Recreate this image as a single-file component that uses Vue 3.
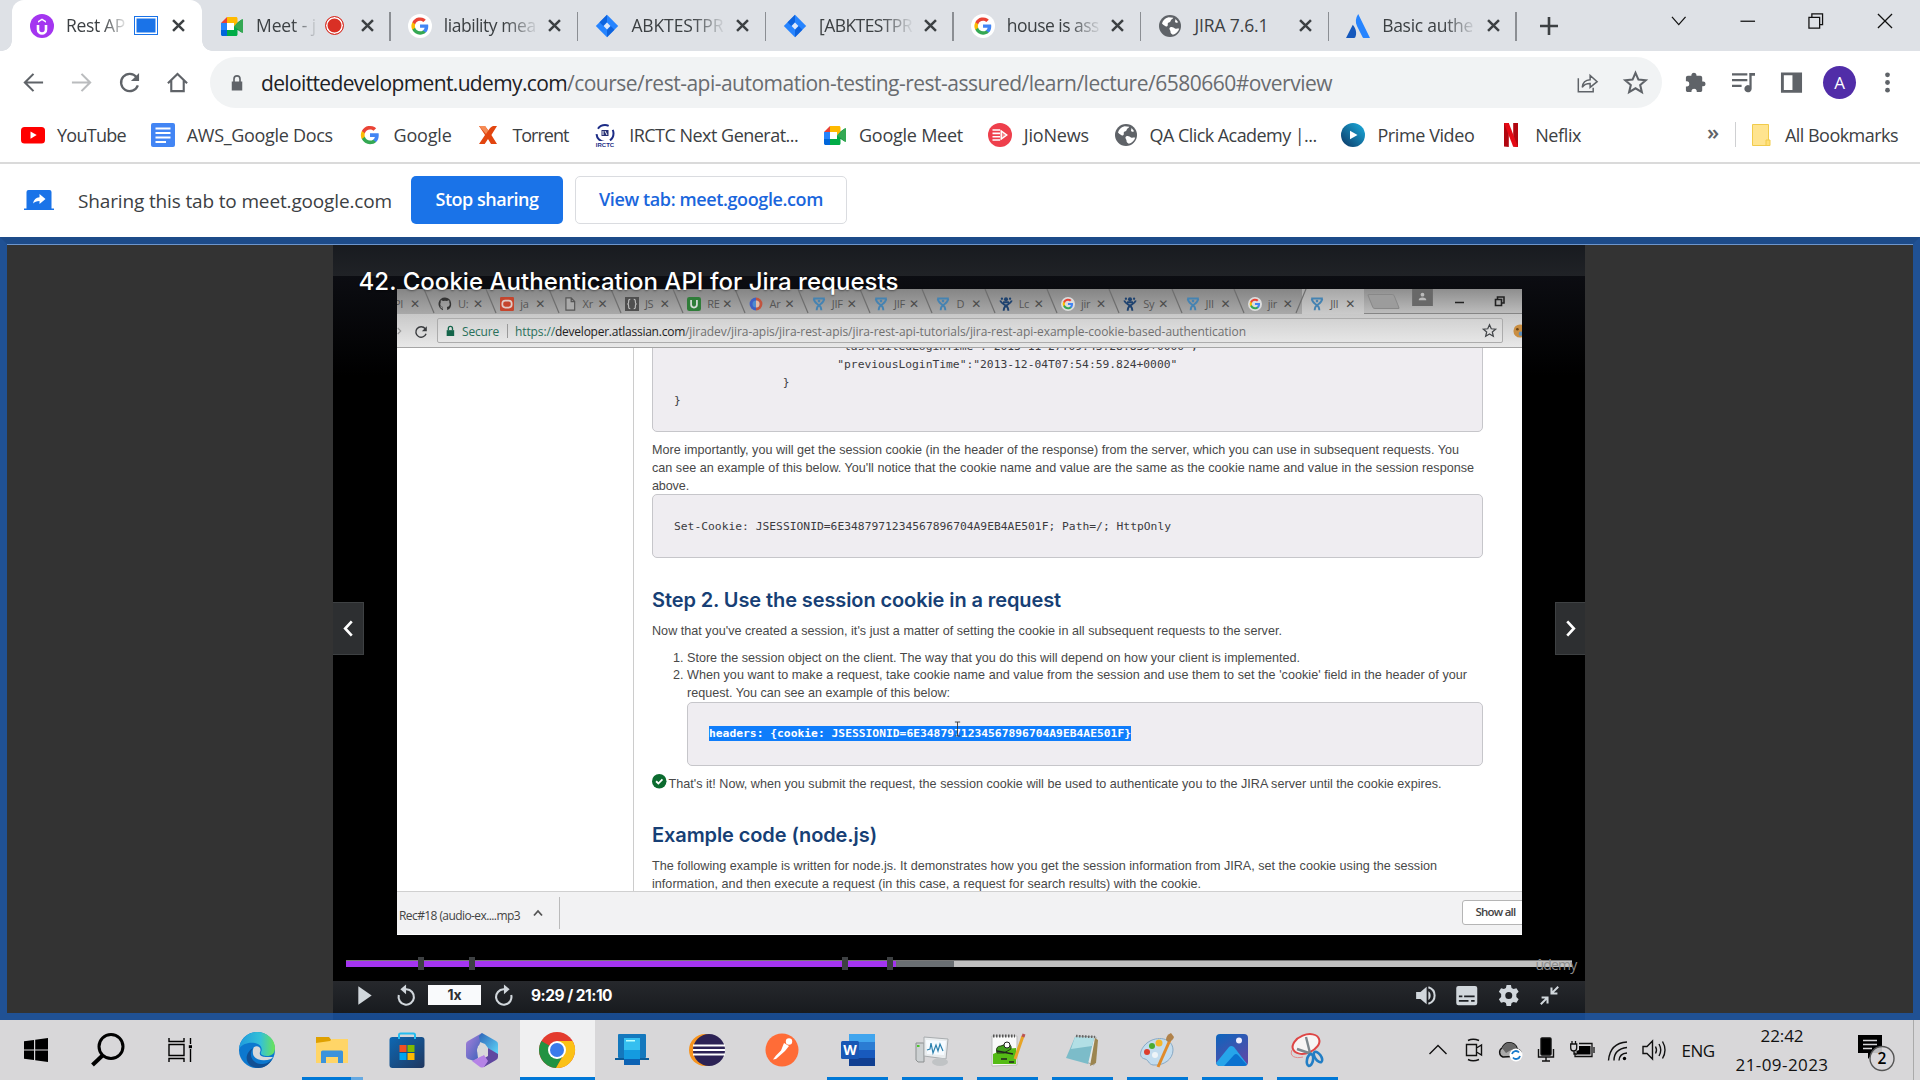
<script setup>
// Spreads or tightens the letters of a label so that it fills the given width.
const vFit = {
  mounted(el, { value }) {
    const count = el.textContent.length
    const natural = el.getBoundingClientRect().width
    if (value && count) el.style.letterSpacing = `${(value - natural) / count}px`
  }
}

const google = '<path fill="#4285f4" d="M22.5 12.2c0-.8-.1-1.500-.2-2.200H12v4.300h5.900c-.3 1.400-1 2.500-2.200 3.300v2.800h3.600c2-1.900 3.200-4.700 3.200-8.200z"/><path fill="#34a853" d="M12 23c3 0 5.500-1 7.300-2.700l-3.600-2.700c-1 .7-2.200 1.100-3.700 1.100-2.900 0-5.300-1.900-6.200-4.600H2.200v2.800C4 20.500 7.700 23 12 23z"/><path fill="#fbbc05" d="M5.800 14.100a6.600 6.600 0 0 1 0-4.200V7.100H2.200a11 11 0 0 0 0 9.800z"/><path fill="#ea4335" d="M12 5.400c1.600 0 3.100.6 4.200 1.600l3.200-3.100A11 11 0 0 0 2.200 7.100l3.600 2.800C6.700 7.300 9.100 5.400 12 5.400z"/>'
const meet = '<path fill="#00832d" d="M14 12l3 3.400 4.500 3V5.800L17 8.800z"/><path fill="#34a853" d="M21.800 5.200L14 12l7.800 6.800c.6.500 1.200.1 1.200-.5V5.700c0-.6-.6-1-1.200-.5z"/><path fill="#0066da" d="M1 16v4.500c0 .8.700 1.500 1.500 1.500H7l1-3-1-3-3-1z"/><path fill="#e94235" d="M7 3L1 9l3 1 3-1 1-3z"/><path fill="#2684fc" d="M1 9h6v7H1z"/><path fill="#ffba00" d="M7 3h9c.9 0 1.500.7 1.500 1.500v4L14 12V9H7z"/><path fill="#00ac47" d="M7 16h7v-4l3.500 3.500v5c0 .9-.6 1.500-1.500 1.500H7z"/><path fill="#fff" d="M7 9h7v7H7z"/>'
const icons = {
  udemy: '<circle cx="12" cy="12" r="12" fill="#a435f0"/><path d="M8 11v4.500a4 4 0 0 0 8 0V11" fill="none" stroke="#fff" stroke-width="2.600"/><path d="M8 8.700V7l4-2.600L16 7v1.700l-4-2.500z" fill="#fff"/>',
  meet,
  google,
  googleDisc: '<circle cx="12" cy="12" r="12" fill="#fff"/><g transform="translate(2.600 2.600) scale(.785)">' + google + '</g>',
  jira: '<path fill="#2684ff" d="M12 .8L23.200 12 12 23.200.8 12z"/><path fill="#0052cc" d="M12 .8v7.400L8.300 12 4.500 8.300zM12 23.200v-7.400l3.700-3.800 3.800 3.700z" opacity=".65"/><path fill="#dee8fa" d="M12 8.600l3.400 3.400-3.400 3.400L8.600 12z"/>',
  globe: '<circle cx="12" cy="12" r="11" fill="#5f6368"/><path fill="#fff" d="M4 9.500c.8-2.700 2.600-5 6.500-6.200l4.800.5c-.8 1.500-2.300 1.700-2.700 3.200-.2 1.300-1.600 1.200-2.600 2-.8.800.5 2.300-.8 3.300-1.300.9-3.200-.9-5.200-2.800zM12 13.500c2-1.200 3.600 0 5 1 1.500.8 3-.4 4.200.3-.8 3-3.400 5.300-6.400 6-1.500-1-2.300-1.500-2.300-3.300 0-1.700-2-2.400-.5-4zM17.500 5l2.700 3.300c-1.300.9-2.700.4-3.200-.6z"/>',
  atlassian: '<path fill="#2684ff" d="M12.200 0c-2.700 4-3.100 8.300-1.100 12.300L16.500 23c.3.600.7 1 1.500 1h6z"/><path fill="#1558bc" d="M6.800 10.700L0 24h8c.6 0 1-.3 1.300-.8 1.800-3.700.7-9-2.500-12.500z"/>',
  youtube: '<rect x="0" y="4" width="24" height="16.500" rx="3.500" fill="#f00"/><path fill="#fff" d="M9.500 8.500v7.200l6.200-3.600z"/>',
  docs: '<rect width="24" height="24" rx="2" fill="#4285f4"/><path stroke="#fff" stroke-width="2.200" d="M4.500 5.500h15M4.500 10h15M4.500 14.500h15M4.500 19H15"/>',
  torrent: '<path fill="#e2450f" d="M3 3h6l3.300 4.600C13.600 5.400 15 3.600 17 3h4l-5.600 9L21 21h-6l-3-5-3.300 5H3l6-9z"/><path fill="#f58b55" d="M3 3h6l3.300 4.600L10 11z"/>',
  irctc: '<circle cx="12" cy="10.500" r="8.500" fill="none" stroke="#1c2c86" stroke-width="2" stroke-dasharray="12 5.800" stroke-dashoffset="4"/><rect x="8.500" y="7" width="7" height="6" fill="#273174"/><path d="M10 8v4M12 8l2 4" stroke="#fff"/><path d="M1 18h22v6H1z" fill="#fff"/><text x="12" y="24" text-anchor="middle" font-family="Liberation Sans" font-weight="700" font-size="6" fill="#1c2c86">IRCTC</text>',
  jio: '<circle cx="12" cy="12" r="12" fill="#ee3f4c"/><path stroke="#fff" stroke-width="1.600" d="M4.500 7h7.500M4.500 10.400h7.500M4.500 13.700h7.500M4.500 17h7.500"/><path fill="#fff" fill-opacity=".35" stroke="#fff" stroke-width="1.500" d="M13.200 8v8l5.500-4z"/>',
  prime: '<defs><linearGradient id="pv" x1="1" x2="0" y1="0" y2="1"><stop stop-color="#1cb0e0"/><stop offset="1" stop-color="#0b3563"/></linearGradient></defs><circle cx="12" cy="12" r="12" fill="url(#pv)"/><path fill="#fff" d="M9 7.800v8.400l7.500-4.200z"/>',
  netflix: '<path fill="#b1060f" d="M5 0h4.800v24L5 23.500zM14.200 0H19v24l-4.800-.5z"/><path fill="#e50914" d="M5 0h4.800L19 24l-4.900-.5z"/>',
  folder: '<path fill="#ffe48f" stroke="#f1cb4b" d="M2.500 1.500h16v21h-16z"/><path fill="#ffdf77" stroke="#f1cb4b" d="M16 22.500v-5.500h4v5.500z"/>',
  close: '<path stroke="#3c4043" stroke-width="2.600" d="M6.300 6.300l11.400 11.400M17.700 6.300L6.300 17.700"/>',
  back: '<path fill="none" stroke="#5f6368" stroke-width="2.200" d="M22 12H3.500M12 3l-9 9 9 9"/>',
  forward: '<path fill="none" stroke="#babcbe" stroke-width="2.200" d="M2 12h18.500M12 3l9 9-9 9"/>',
  reload: '<path fill="none" stroke="#5f6368" stroke-width="2.400" d="M19.300 6.400A9 9 0 1 0 20.700 15"/><path fill="#5f6368" d="M22 2v8.500h-8.500z"/>',
  home: '<path fill="none" stroke="#5f6368" stroke-width="2.200" d="M2 12.800L12 3l10 9.800M5.500 10v11h13V10"/>',
  lock: '<path fill="#5f6368" d="M5 10h14v12H5z"/><path fill="none" stroke="#5f6368" stroke-width="2.200" d="M8 11V6.500a4 4 0 0 1 8 0V11"/>',
  share: '<path fill="none" stroke="#5f6368" stroke-width="1.700" d="M1.500 7v15.500h17V18M6 17.500c.5-5.500 4-8.500 9-8.700V4l8 7-8 6.500v-4.300c-4 0-7 1.300-9 4.300z"/>',
  star: '<path fill="none" stroke="#5f6368" stroke-width="2" d="M12 2.800l2.800 6.400 7 .6-5.300 4.600 1.600 6.800-6.100-3.600-6.100 3.600 1.600-6.800-5.300-4.600 7-.6z"/>',
  puzzle: '<path fill="#5f6368" d="M20 11h-1V7c0-1.100-.9-2-2-2h-4V4a2.700 2.700 0 0 0-5.300 0v1H4c-1.100 0-2 .9-2 2v3.800h1.300a2.800 2.800 0 0 1 0 5.500H2V20c0 1.100.9 2 2 2h3.800v-1.300a2.800 2.800 0 0 1 5.500 0V22H17c1.100 0 2-.9 2-2v-4h1a2.500 2.500 0 0 0 0-5z"/>',
  queue: '<path stroke="#5f6368" stroke-width="2.200" d="M0 3.500h16M0 9.500h16M0 15.500h10"/><path fill="#5f6368" d="M18 2h6v3h-3.500v13.500a3.800 3.800 0 1 1-2.300-3.500z"/>',
  panel: '<path fill="#5f6368" fill-rule="evenodd" d="M1 1.500h22v21.300H1zm3 3v15.300h9V4.500z"/>',
  dots: '<circle cx="12" cy="4" r="2.500"/><circle cx="12" cy="12" r="2.500"/><circle cx="12" cy="20" r="2.500"/>',
  present: '<path fill="#1a73e8" d="M2.500 4Q2.500 2 4.500 2h21q2 0 2 2v16.500H30V22H0v-1.500h2.500z"/><path fill="#fff" d="M9 15.500c.7-4 3-6 6.500-6.300V6l6 5-6 4.900v-3c-3 0-5 .8-6.500 2.600z"/>',
  play: '<path fill="#d1d7dc" d="M4 1l16 11L4 23z"/>',
  rewind: '<path fill="none" stroke="#d1d7dc" stroke-width="2.400" d="M3.200 12A8.800 8.800 0 1 0 12 5.500H9"/><path fill="#d1d7dc" d="M11.500 0v11L5 5.500z"/>',
  ahead: '<path fill="none" stroke="#d1d7dc" stroke-width="2.400" d="M20.800 12A8.800 8.800 0 1 1 12 5.500h3"/><path fill="#d1d7dc" d="M12.500 0v11L19 5.500z"/>',
  sound: '<path fill="#d1d7dc" d="M1 8v8h5l7 6V2L6 8zM15 7v10c3.500-2 3.500-8 0-10z"/><path fill="none" stroke="#d1d7dc" stroke-width="2.300" d="M15 2.500c9.500 3 9.500 16 0 19"/>',
  captions: '<rect y="1" width="24" height="22" rx="2.500" fill="#d1d7dc"/><path stroke="#1d2024" stroke-width="2" d="M3 13h4M9 13h12M3 18h11M17 18h4"/>',
  gear: '<path fill="#d1d7dc" fill-rule="evenodd" d="M9.500 0h5l.7 3.300 2.300 1.300 3.300-1 2.500 4.200-2.600 2.400v3.600l2.600 2.400-2.500 4.200-3.300-1-2.300 1.300-.7 3.300h-5l-.7-3.300-2.300-1.300-3.300 1L.7 16.200l2.600-2.400v-3.600L.7 7.800l2.500-4.200 3.300 1 2.300-1.300zM12 8a4 4 0 1 0 0 8 4 4 0 0 0 0-8z"/>',
  shrink: '<path fill="none" stroke="#d1d7dc" stroke-width="2.600" d="M23 1l-8 8M14.500 2v7.500H22M1 23l8-8M2 14.500h7.500V22"/>',
  github: '<path fill="#333" d="M12 1a11 11 0 0 0-3.500 21.500v-3c-3 .6-3.700-1.200-4-2-.4-.8-1-1-1.200-1.500 2-.6 2.400 2 4 2 .8 0 1.200-.4 1.500-1C4 16.500 3 13 4.800 9c-.4-1-.3-2.500.1-3.500 1.700 0 2.800.8 3.600 1.400a12 12 0 0 1 7 0c.8-.6 2-1.400 3.600-1.400.4 1 .5 2.500.1 3.500 1.800 4 .8 7.500-4 8.200.4.500.5 1.500.5 5A11 11 0 0 0 12 1z"/>',
  oracle: '<rect width="24" height="24" rx="2" fill="#c5452d"/><rect x="4" y="6" width="16" height="12" rx="5" fill="none" stroke="#e2cbc5" stroke-width="3"/>',
  file: '<path fill="#aaa" stroke="#555" stroke-width="2" d="M5 1.500h9l6 6v15H5zM14 2v6h6"/>',
  json: '<rect width="24" height="24" fill="#4f4f4f"/><path fill="none" stroke="#bbb" stroke-width="2" d="M9 4c-5 0-1 6-4 8 3 2-1 8 4 8M15 4c5 0 1 6 4 8-3 2 1 8-4 8"/>',
  ucircle: '<rect width="24" height="24" rx="4" fill="#2f7d39"/><path fill="none" stroke="#d5dbd6" stroke-width="3" d="M7 5v8a5 5 0 0 0 10 0V5"/>',
  ring: '<path fill="#3f5fc4" d="M12 1a11 11 0 0 0 0 22z"/><path fill="#c2543f" d="M12 1a11 11 0 0 1 0 22z"/><circle cx="12" cy="12" r="6" fill="#4f8bd0"/><path fill="#e5b9a4" d="M12 6a6 6 0 0 1 0 12z"/>',
  jiraLight: '<path fill="none" stroke="#4583b2" stroke-width="3.200" d="M2 2.500h20M3 3c1 7 5 8 9 11 3 2 4 5 4 8.500M21 3c-1 7-5 8-9 11-3 2-4 5-4 8.500"/><circle cx="12" cy="7" r="2.300" fill="#4583b2"/>',
  jiraDark: '<path fill="none" stroke="#1e426f" stroke-width="3.200" d="M2 6c2 5 6 6 10 9 3 2 4 4 4 8.500M22 6c-2 5-6 6-10 9-3 2-4 4-4 8.500M7 9h10"/><circle cx="12" cy="4" r="3.500" fill="#1e426f"/><circle cx="5" cy="3" r="2" fill="#1e426f"/><circle cx="19" cy="3" r="2" fill="#1e426f"/>',
  googleDim: '<circle cx="12" cy="12" r="12" fill="#ddd"/><g transform="translate(2 2) scale(.83)">' + google + '</g>'
}

const tabs = [
  { icon: 'udemy', label: 'Rest AP', width: 59, active: true, mark: 'share' },
  { icon: 'meet', label: 'Meet - j', width: 60, mark: 'rec' },
  { icon: 'googleDisc', label: 'liability mea', width: 92 },
  { icon: 'jira', label: 'ABKTESTPR', width: 92 },
  { icon: 'jira', label: '[ABKTESTPR', width: 93 },
  { icon: 'googleDisc', label: 'house is ass', width: 92 },
  { icon: 'globe', label: 'JIRA 7.6.1', width: 74 },
  { icon: 'atlassian', label: 'Basic authe', width: 91 }
]

const bookmarks = [
  { icon: 'youtube', label: 'YouTube', width: 69 },
  { icon: 'docs', label: 'AWS_Google Docs', width: 146 },
  { icon: 'google', label: 'Google', width: 58 },
  { icon: 'torrent', label: 'Torrent', width: 56 },
  { icon: 'irctc', label: 'IRCTC Next Generat...', width: 169 },
  { icon: 'meet', label: 'Google Meet', width: 104 },
  { icon: 'jio', label: 'JioNews', width: 65 },
  { icon: 'globe', label: 'QA Click Academy |...', width: 167 },
  { icon: 'prime', label: 'Prime Video', width: 97 },
  { icon: 'netflix', label: 'Neflix', width: 46 }
]

const lessonTabs = [
  ['github', 'U:'], ['oracle', 'ja'], ['file', 'Xr'], ['json', 'JS'], ['ucircle', 'RE'], ['ring', 'Ar'],
  ['jiraLight', 'JIF'], ['jiraLight', 'JIF'], ['jiraLight', 'D'], ['jiraDark', 'Lc'], ['googleDim', 'jir'],
  ['jiraDark', 'Sy'], ['jiraLight', 'JII'], ['googleDim', 'jir'], ['jiraLight', 'JII']
]

const markers = [418, 469, 842, 887].map((x) => x - 346)

const session = `                        "lastFailedLoginTime":"2013-11-27T09:43:28.839+0000",
                        "previousLoginTime":"2013-12-04T07:54:59.824+0000"
                }
}`

const apps = [
  { name: 'edge', svg: '<defs><linearGradient id="e1" x2="1"><stop stop-color="#1f9bde"/><stop offset=".6" stop-color="#35c1d6"/><stop offset="1" stop-color="#6be455"/></linearGradient></defs><circle cx="18" cy="18" r="18" fill="#0c78cf"/><path fill="url(#e1)" d="M0 17C1 7 9 0 18 0c10 0 18 7 18 16 0 6-4 8-8 8-5 0-7-2-6-4 2-3 0-8-6-9C9 10 3 12 0 17z"/><path fill="#114f93" d="M14 16c-5 7-1 15 8 16 5 0 8-1 11-5-4 9-14 11-21 7-7-5-5-14 2-18z"/><path fill="#d8d8da" d="M15 15c4-2 8 1 6 5-1 3 1 5 6 5h7l-2 2c-9 3-17 0-18-5-.4-3-.2-5 1-7z"/>' },
  { name: 'explorer', open: true, pair: true, svg: '<path fill="#dfa000" d="M2 5h13l3 4v5H2z"/><path fill="#ffd567" d="M2 11l14-2 2-2h16v24H2z"/><path fill="#3b93dc" d="M7 31V20q0-1.500 1.500-1.500h19q1.500 0 1.500 1.500v11h-5v-6H12v6z"/>' },
  { name: 'store', svg: '<defs><linearGradient id="s1" y2="1"><stop stop-color="#0d68b4"/><stop offset="1" stop-color="#20375f"/></linearGradient></defs><rect x=".5" y="5" width="35" height="31" rx="3" fill="url(#s1)"/><path fill="none" stroke="#25bdf0" stroke-width="2" d="M10 7V3q0-1.500 1.500-1.500h13Q26 1.500 26 3v4"/><path fill="#f25022" d="M10.500 13h7v7h-7z"/><path fill="#7fba00" d="M18.500 13h7v7h-7z"/><path fill="#00a4ef" d="M10.500 21h7v7h-7z"/><path fill="#ffb900" d="M18.500 21h7v7h-7z"/>' },
  { name: 'office', svg: '<defs><linearGradient id="o1" y2="1"><stop stop-color="#ad80dc"/><stop offset="1" stop-color="#3561b8"/></linearGradient><linearGradient id="o2" x2="1" y2="1"><stop stop-color="#2d64b8"/><stop offset="1" stop-color="#5fd8fa"/></linearGradient></defs><path fill="url(#o1)" d="M18 1L4 9q-2 1-2 3v12q0 2 2 3l6 2 4-3-1-8 3-7z"/><path fill="url(#o2)" d="M18 1l14 8q2 1 2 3v11l-10-7-3-4-5-2-1-6z"/><path fill="#6047a0" d="M34 22v3q0 2-2 3l-12 7-6-5 10-6 0-8z"/><path fill="#b583e6" d="M8 29l12-6 4 6-4 6q-2 1-4 0z"/><path fill="#d8d8da" d="M18 12l4 2 1.500 5-5.500 5-5-5 1-5z"/>' },
  { name: 'chrome', open: true, focused: true, svg: '<circle cx="18" cy="18" r="18" fill="#e33b2e"/><path fill="#229342" d="M2.400 9A18 18 0 0 0 17 36l8-14-7-4z"/><path fill="#fbc116" d="M18 9h15.600A18 18 0 0 1 17 36l8-14z"/><circle cx="18" cy="18" r="9" fill="#fff"/><circle cx="18" cy="18" r="7" fill="#3a7bea"/>' },
  { name: 'desktop', svg: '<rect x="4" y="2" width="28" height="24" rx="1" fill="#1478bd"/><path fill="#0d5c99" d="M1 26h34v2H1z"/><path fill="#35bff0" d="M10 6h16v12H10z"/><path fill="#149be0" d="M10 18h16v9H10z"/><path fill="#0c62b4" d="M10 27h16v6H10z"/><path fill="#bff" d="M12 8h9v1.500h-9z"/>' },
  { name: 'eclipse', svg: '<circle cx="16" cy="18" r="16" fill="#f7941e"/><circle cx="20" cy="18" r="16" fill="#2c2255"/><path stroke="#fff" stroke-width="2" d="M4 13.500h32M4 18h32M4 22.500h32"/>' },
  { name: 'postman', svg: '<circle cx="18" cy="18" r="16.500" fill="#ff6c37"/><circle cx="25" cy="9.500" r="3.200" fill="#fff"/><path fill="#fff" d="M20 11l5 3-4 5-9 8-3 .5 3-4 5-5z"/>' },
  { name: 'word', open: true, svg: '<path fill="#41a5ee" d="M10 2h26v8H10z"/><path fill="#2b7cd3" d="M10 10h26v8H10z"/><path fill="#185abd" d="M10 18h26v8H10z"/><path fill="#103f91" d="M10 26h26v8H10z"/><rect x="2" y="9" width="18" height="18" rx="1.500" fill="#1857b5"/><text x="11" y="23" text-anchor="middle" font-family="Open Sans" font-size="14" font-weight="700" fill="#fff">W</text>' },
  { name: 'monitor', open: true, svg: '<path fill="#ccd0d2" stroke="#8b8f90" d="M2 11h8v19H4l-2-2z"/><path fill="#e9ecee" stroke="#a8acaf" d="M10 5l24 2-2 20-22-3z"/><path fill="#f6fbff" d="M12 8l20 1-2 14-17-1z"/><path fill="none" stroke="#2b80ae" stroke-width="1.200" d="M13 18l3-1 1-6 2 10 3-8 2 6 2-7 3 7"/><ellipse cx="26" cy="30" rx="8" ry="4" fill="#c0c3c5"/><path fill="#4cc62c" d="M3 13h2.500v2H3z"/>' },
  { name: 'notepadpp', open: true, svg: '<path fill="#fafafa" stroke="#bbb" d="M3 4h25v29l-25 1z"/><path fill="#54bb15" d="M4 22q12-6 23-6v16H4z"/><path stroke="#555" stroke-dasharray="1.500 1.500" stroke-width="3" d="M4 4h22"/><path fill="#43a01c" stroke="#213a10" d="M8 21q-2-7 4-7l5-2q6 0 5 5l-7 4z"/><circle cx="18" cy="13" r="3" fill="#fff" stroke="#222"/><path stroke="#222" stroke-width="1.500" d="M8 19l16 3M12 27h6m2 3h5"/><path stroke="#e7a427" stroke-width="3" d="M34 4l-8 23"/><path stroke="#b55" stroke-width="3" d="M35 2l-1 3"/>' },
  { name: 'notepad', open: true, svg: '<path fill="#e5e8e8" stroke="#a0a5a5" d="M12 4l20 1-2 28-8-3z"/><path fill="#7cbcc9" d="M11 5l19 1-6 26-22-6z"/><path fill="#b2dfe5" d="M11 5l19 1-2 8-21 3z"/><path fill="#9c8550" d="M31 6l3 2-2 23-6 3z"/><path stroke="#666" stroke-width="2.500" stroke-dasharray="1.500 1.500" d="M12 4l19 1"/>' },
  { name: 'paint', open: true, svg: '<path fill="#c3dcee" stroke="#87a9c5" d="M8 11C18 3 34 6 34 18c0 9-9 16-20 15-5-1-4-5-8-6C-2 25 2 16 8 11z"/><circle cx="8" cy="20" r="3" fill="#dc3e2e"/><circle cx="13" cy="14" r="3" fill="#4aab31"/><circle cx="20" cy="11" r="3.500" fill="#f4b62c"/><circle cx="16" cy="23" r="3" fill="#eef4f8"/><path stroke="#e08b2a" stroke-width="3" d="M31 8L19 35"/><path fill="#b0824b" d="M27 8q0-5 5-7l3 4q-1 4-6 5z"/>' },
  { name: 'photos', open: true, svg: '<defs><linearGradient id="p1" x2=".6" y2="1"><stop stop-color="#0c65bd"/><stop offset="1" stop-color="#5b4aa8"/></linearGradient></defs><rect x="2" y="2" width="32" height="32" rx="4" fill="url(#p1)"/><path fill="#26a5ea" d="M2 31l13-16q2-2 5 0l13 17q-1 2-3 2H5q-2 0-3-3z"/><path fill="#0a72cf" d="M10 34l10-11q2-2 4 0l9 10-3 1z"/><circle cx="25" cy="8.500" r="3" fill="#eef"/>' },
  { name: 'snip', open: true, svg: '<ellipse cx="17" cy="12" rx="14" ry="9" fill="#f7f4f4" stroke="#de4545" stroke-width="2" transform="rotate(-22 17 12)"/><path fill="none" stroke="#e48a8a" d="M3 18c-3 6 3 9 11 7"/><path stroke="#7d868c" stroke-width="2.400" d="M17 5l4 16M8 17l15 5"/><ellipse cx="21" cy="28" rx="3" ry="6" fill="none" stroke="#227ec5" stroke-width="2.600" transform="rotate(12 21 28)"/><ellipse cx="29" cy="25" rx="3" ry="6" fill="none" stroke="#227ec5" stroke-width="2.600" transform="rotate(-35 29 25)"/>' }
]
</script>

<template>
  <div class="screen">
    <header class="strip">
      <div v-for="(tab, i) in tabs" :key="i" class="tab" :class="{ active: tab.active, ruled: i > 0 }">
        <svg class="favicon" viewBox="0 0 24 24" v-html="icons[tab.icon]" />
        <div class="tab-label" :class="{ narrow: tab.mark, plain: tab.label === 'JIRA 7.6.1' }"><span v-fit="tab.width">{{ tab.label }}</span></div>
        <i v-if="tab.mark" :class="tab.mark" />
        <svg class="tab-close" viewBox="0 0 24 24" v-html="icons.close" />
      </div>
      <svg class="plus" viewBox="0 0 24 24"><path stroke="#3c4043" stroke-width="2.600" d="M12 3v18M3 12h18" /></svg>
      <div class="window-keys">
        <svg viewBox="0 0 18 18"><path d="M2 5l7 8 7-8" /></svg>
        <svg viewBox="0 0 18 18"><path d="M1.500 9.500h15" /></svg>
        <svg viewBox="0 0 18 18"><path d="M2 5.500h11v11H2zM5 5V2h11v11h-3" /></svg>
        <svg viewBox="0 0 18 18"><path d="M2 2l14.500 14.500M16.500 2L2 16.500" /></svg>
      </div>
    </header>

    <div class="toolbar">
      <svg v-for="n in ['back', 'forward', 'reload', 'home']" :key="n" class="nav" viewBox="0 0 24 24" v-html="icons[n]" />
      <div class="omnibox">
        <svg class="lock" viewBox="0 0 24 24" v-html="icons.lock" />
        <span v-fit="306" class="host">deloittedevelopment.udemy.com</span>
        <span v-fit="765" class="path">/course/rest-api-automation-testing-rest-assured/learn/lecture/6580660#overview</span>
        <svg class="share-icon" viewBox="0 0 24 24" v-html="icons.share" />
        <svg class="star" viewBox="0 0 24 24" v-html="icons.star" />
      </div>
      <div class="actions">
        <svg viewBox="0 0 24 24" v-html="icons.puzzle" />
        <svg viewBox="0 0 24 24" v-html="icons.queue" />
        <svg viewBox="0 0 24 24" v-html="icons.panel" />
        <span class="avatar">A</span>
        <svg viewBox="0 0 24 24" fill="#5f6368" v-html="icons.dots" />
      </div>
    </div>

    <nav class="bookmarks">
      <div v-for="b in bookmarks" :key="b.label" class="bookmark">
        <svg viewBox="0 0 24 24" :class="{ small: b.icon === 'google' }" v-html="icons[b.icon]" />
        <span v-fit="b.width">{{ b.label }}</span>
      </div>
      <span class="more">»</span>
      <div class="bookmark all">
        <svg viewBox="0 0 24 24" v-html="icons.folder" />
        <span v-fit="113">All Bookmarks</span>
      </div>
    </nav>

    <div class="infobar">
      <svg viewBox="0 0 30 24" v-html="icons.present" />
      <span v-fit="314" class="sharing">Sharing this tab to meet.google.com</span>
      <button class="stop"><span v-fit="103">Stop sharing</span></button>
      <button class="view"><span v-fit="224">View tab: meet.google.com</span></button>
    </div>

    <main class="page">
      <section class="player">
        <div class="top-shade" />
        <h1><span v-fit="540">42. Cookie Authentication API for Jira requests</span></h1>

        <div class="video">
          <div class="v-tabs">
            <div class="v-tab first"><span>PI</span><b>✕</b></div>
            <div v-for="(t, i) in lessonTabs" :key="i" class="v-tab" :class="{ current: i === 14 }">
              <svg class="slant" viewBox="0 0 10 24" preserveAspectRatio="none"><path :d="i === 14 ? 'M10 0L0 24' : 'M0 0l10 24'" /></svg>
              <svg class="v-icon" viewBox="0 0 24 24" v-html="icons[t[0]]" />
              <span>{{ t[1] }}</span><b>✕</b>
            </div>
            <i class="v-new" />
            <svg class="v-person" viewBox="0 0 22 18"><path fill="#686868" d="M0 0h22v18H0z" /><circle cx="11" cy="6" r="2" fill="#bbb" /><path fill="#bbb" d="M7 12q0-3 4-3t4 3z" /></svg>
            <svg class="v-keys" viewBox="0 0 54 18"><path d="M3 10.500h9M43.500 7.500h6v6h-6zM45.500 7V5h6.500v6h-2" /></svg>
          </div>
          <div class="v-toolbar">
            <svg class="v-forward" viewBox="0 0 8 12"><path d="M1 2l4 4-4 4" /></svg>
            <svg class="v-reload" viewBox="0 0 24 24" v-html="icons.reload" />
            <div class="v-url">
              <svg viewBox="0 0 12 14"><path fill="#14654a" d="M2 6h9v7H2z" /><path fill="none" stroke="#14654a" stroke-width="1.600" d="M4 6V4a2.400 2.400 0 0 1 5 0v2" /></svg>
              <span v-fit="37" class="secure">Secure</span>
              <i />
              <span v-fit="40" class="secure">https://</span>
              <span v-fit="130" class="v-host">developer.atlassian.com</span>
              <span v-fit="561" class="v-path">/jiradev/jira-apis/jira-rest-apis/jira-rest-api-tutorials/jira-rest-api-example-cookie-based-authentication</span>
              <svg class="v-star" viewBox="0 0 24 24" v-html="icons.star" />
            </div>
            <svg class="cookie" viewBox="0 0 16 16"><circle cx="8" cy="8" r="7.500" fill="#c98e42" /><circle cx="5" cy="6" r="1.500" fill="#6a4318" /><circle cx="9" cy="11" r="2.500" fill="#5c8dba" /></svg>
          </div>
          <div class="doc">
            <article>
              <pre class="code response">{{ session }}</pre>
              <p class="intro">
                <span v-fit="807">More importantly, you will get the session cookie (in the header of the response) from the server, which you can use in subsequent requests. You</span>
                <span v-fit="822">can see an example of this below. You'll notice that the cookie name and value are the same as the cookie name and value in the session response</span>
                <span v-fit="37">above.</span>
              </p>
              <div class="code box"><span v-fit="497">Set-Cookie: JSESSIONID=6E3487971234567896704A9EB4AE501F; Path=/; HttpOnly</span></div>
              <h2><span v-fit="409">Step 2. Use the session cookie in a request</span></h2>
              <p class="now"><span v-fit="630">Now that you've created a session, it's just a matter of setting the cookie in all subsequent requests to the server.</span></p>
              <div class="step"><em>1.</em><p><span v-fit="613">Store the session object on the client. The way that you do this will depend on how your client is implemented.</span></p></div>
              <div class="step"><em>2.</em><p>
                <span v-fit="780">When you want to make a request, take cookie name and value from the session and use them to set the 'cookie' field in the header of your</span>
                <span v-fit="263">request. You can see an example of this below:</span></p></div>
              <div class="code box nested">
                <span v-fit="422" class="selected">headers: {cookie: JSESSIONID=6E3487971234567896704A9EB4AE501F}</span>
                <svg class="caret" viewBox="0 0 8 18"><path d="M1 1h6M4 1v16M1 17h6" /></svg>
              </div>
              <p class="done">
                <svg viewBox="0 0 16 16"><circle cx="8" cy="8" r="8" fill="#0b6b2f" /><path d="M4.500 8l2.500 2.500 4.500-4.700" fill="none" stroke="#fff" stroke-width="2" /></svg>
                <span v-fit="773">That's it! Now, when you submit the request, the session cookie will be used to authenticate you to the JIRA server until the cookie expires.</span>
              </p>
              <h2><span v-fit="225">Example code (node.js)</span></h2>
              <p class="follow">
                <span v-fit="785">The following example is written for node.js. It demonstrates how you get the session information from JIRA, set the cookie using the session</span>
                <span v-fit="549">information, and then execute a request (in this case, a request for search results) with the cookie.</span>
              </p>
            </article>
          </div>
          <footer class="downloads">
            <span v-fit="121">Rec#18 (audio-ex....mp3</span>
            <svg viewBox="0 0 10 8"><path d="M1 6.500L5 2l4 4.500" /></svg>
            <i />
            <div class="show-all"><span v-fit="40">Show all</span></div>
          </footer>
        </div>

        <div class="step-key prev"><svg viewBox="0 0 12 18"><path d="M10 1.500L3 9l7 7.500" /></svg></div>
        <div class="step-key next"><svg viewBox="0 0 12 18"><path d="M2 1.500L9 9l-7 7.500" /></svg></div>

        <div class="progress">
          <i class="played" /><i class="buffered" />
          <i v-for="x in markers" :key="x" class="marker" :style="{ left: x + 'px' }" />
          <span v-fit="41" class="watermark">ûdemy</span>
        </div>

        <div class="controls">
          <svg class="play" viewBox="0 0 24 24" v-html="icons.play" />
          <svg class="rewind" viewBox="0 0 24 24" v-html="icons.rewind" />
          <span class="rate">1x</span>
          <svg class="ahead" viewBox="0 0 24 24" v-html="icons.ahead" />
          <span v-fit="81" class="time">9:29 / 21:10</span>
          <div class="control-end">
            <svg v-for="n in ['sound', 'captions', 'gear', 'shrink']" :key="n" viewBox="0 0 24 24" v-html="icons[n]" />
          </div>
        </div>
      </section>
      <div class="share-frame" />
    </main>

    <footer class="taskbar">
      <div class="sys"><svg viewBox="0 0 24 24"><path d="M0 3.300l10-1.400V11.400H0zM11.200 1.700L24 0v11.400H11.200zM0 12.600h10v9.500L0 20.700zM11.200 12.600H24V24l-12.800-1.700z" /></svg></div>
      <div class="sys"><svg class="search" viewBox="0 0 34 34"><circle cx="20" cy="13.500" r="12" fill="none" stroke="#000" stroke-width="3" /><path stroke="#000" stroke-width="4" d="M11.500 22.500L1.500 32" /></svg></div>
      <div class="sys"><svg viewBox="0 0 24 24" fill="none" stroke="#000" stroke-width="1.400"><path d="M1 0v3.500h15V0M1 24v-3.500h15V24M1 6.500h15v11H1zM22.500 0v6M22.500 11v13" /><path d="M20.800 7.200h3.200v3h-3.200z" fill="#000" stroke="none" /></svg></div>
      <div class="apps">
        <div v-for="a in apps" :key="a.name" class="app" :class="{ open: a.open, pair: a.pair, focused: a.focused }"><svg viewBox="0 0 36 36" v-html="a.svg" /></div>
      </div>
      <div class="tray">
        <svg viewBox="0 0 24 24"><path d="M3.500 16L12 7.500l8.500 8.500" /></svg>
        <svg viewBox="0 0 24 24"><path d="M4.500 6.500h10v11h-10zM14.500 10l5-3v10l-5-3M6 2.500q5-2.500 11 0M6 21.500q5 2.500 11 0" /></svg>
        <svg viewBox="0 0 24 24"><path fill="#aaa" d="M5 19a5 5 0 0 1-1-9q4-8 12-4 3 2 3 5 5 1 4 7z" /><path fill="#666" stroke="none" d="M4 10q4-8 12-4 3 2 3 5l-6 1-5 3z" /><circle cx="18" cy="17" r="6.500" fill="#fff" stroke="none" /><path stroke="#1679cb" stroke-width="1.800" d="M14 16a4 4 0 0 1 7-1.500M22 18a4 4 0 0 1-7 1.500" /></svg>
        <svg viewBox="0 0 24 24"><rect x="7" y="0" width="10" height="17" rx="1" fill="#000" /><path d="M4.500 11v8h15v-8M12 19v4M8 23h8" stroke-width="1.400" /></svg>
        <svg viewBox="0 0 24 24"><path fill="#000" stroke="none" d="M9 8h11.500v8.500H6.500V13l2.500-1z" /><path d="M9 5.500h13v13H5v-4M24 9v6M.7 6v4q0 3 3 3t3-3V6zM2 6V3M5.500 6V3M4 13v3h3" stroke-width="1.300" /></svg>
        <svg viewBox="0 0 24 24"><path d="M2.500 22.500Q4 5 21 4M8 22.500Q8 11 21 9.500M13 22.500q.5-7 8-7.500" /><circle cx="18.500" cy="20.500" r="1.700" fill="#000" stroke="none" /></svg>
        <svg viewBox="0 0 24 24"><path d="M1 8.500h4l5.500-5.500v18L5 15.500H1zM13.500 8.500q2 3.500 0 7M17 6q3.500 6 0 12M20.500 3.500q5 8.500 0 17" /></svg>
        <span v-fit="33" class="lang">ENG</span>
        <div class="clock"><span v-fit="43">22:42</span><span v-fit="93">21-09-2023</span></div>
        <svg class="notice" viewBox="0 0 38 38"><path fill="#000" stroke="none" d="M1 1h24v18h-9l-5 6v-6H1z" /><path stroke="#d8d7d9" stroke-width="1.300" d="M6 6.500h14M6 10.500h14M6 14.500h9" /><circle cx="25" cy="24.500" r="12" fill="#d8d7d9" fill-opacity=".88" stroke="#555" /><text x="25" y="30" text-anchor="middle" stroke="none" font-family="Open Sans" font-size="15.500" font-weight="600" fill="#000">2</text></svg>
        <i class="desktop-edge" />
      </div>
    </footer>
  </div>
</template>

<style>
body { overflow: hidden; }
</style>

<style scoped>
* { box-sizing: border-box; }
svg { flex: none; display: block; overflow: visible; }
span { white-space: pre; flex: none; }
.screen { width: 1920px; height: 1080px; display: flex; flex-direction: column; overflow: hidden; background: #fff; font-family: "Open Sans", "Noto Sans", sans-serif; color: #3c4043; }

.strip { flex: none; height: 51px; background: #dee1e6; display: flex; align-items: center; padding-left: 12px; position: relative; }
.tab { width: 187.700px; height: 51px; flex: none; display: flex; align-items: center; position: relative; padding-left: 18px; font-size: 17.500px; }
.tab.active { width: 190px; background: #fff; border-radius: 12px 12px 0 0; }
.tab.active::before, .tab.active::after { content: ""; position: absolute; bottom: 0; width: 10px; height: 10px; }
.tab.active::before { left: -10px; background: radial-gradient(circle at 0 0, transparent 9.500px, #fff 10px); }
.tab.active::after { right: -10px; background: radial-gradient(circle at 100% 0, transparent 9.500px, #fff 10px); }
.tab.ruled::after { content: ""; position: absolute; right: -1px; top: 12px; width: 1.500px; height: 29px; background: #8b8e93; }
.favicon { width: 24px; height: 24px; }
.tab-label { margin-left: 12px; width: 95px; height: 30px; line-height: 29px; mask-image: linear-gradient(90deg, #000 65%, #0001 98%); }
.tab-label span, .sharing, .bookmark span { display: inline-block; }
.tab-label.plain { mask-image: none; }
.tab-label.narrow { width: 61px; mask-image: linear-gradient(90deg, #000 60%, #0001 100%); }
.share { width: 24px; height: 19px; margin-left: 7px; border: 1.500px solid #1a73e8; background: #1a73e8; box-shadow: inset 0 0 0 1.500px #fff; }
.rec { width: 19px; height: 19px; margin-left: 8px; border: 1.500px solid #d93025; border-radius: 50%; background: #d93025; box-shadow: inset 0 0 0 1.500px #fff; }
.tab-close { position: absolute; left: 153.500px; top: 14px; width: 23px; height: 23px; }
.active .tab-close { left: 155px; }
.plus { width: 24px; height: 24px; margin-left: 21px; }
.window-keys { margin-left: auto; display: flex; gap: 51px; padding: 0 27px 9px 0; }
.window-keys svg { width: 17.500px; height: 17.500px; fill: none; stroke: #111; stroke-width: 1.300; }

.toolbar { flex: none; height: 63px; display: flex; align-items: center; padding-left: 21.500px; }
.nav { width: 23px; height: 23px; margin-right: 25px; }
.nav:nth-child(4) { margin-right: 21.500px; }
.omnibox { width: 1452px; height: 51px; border-radius: 26px; background: #f1f3f4; display: flex; align-items: center; font-size: 21px; line-height: 48px; }
.lock { width: 18px; height: 20px; margin: 0 15px 0 18px; }
.host { color: #202124; display: inline-block; }
.path { color: #696c70; display: inline-block; }
.share-icon { width: 23px; height: 21px; margin-left: auto; }
.star { width: 25px; height: 25px; margin: 0 14px 0 24px; }
.actions { display: flex; align-items: center; gap: 25px; margin-left: 22px; }
.actions svg { width: 23px; height: 23px; }
.avatar { width: 33px; height: 33px; margin: 0 -5px; border-radius: 50%; background: #512da8; color: #fff; text-align: center; font-size: 17px; line-height: 33px; }

.bookmarks { flex: none; height: 50px; border-bottom: 2px solid #dadada; display: flex; align-items: center; gap: 24.800px; padding: 0 22px 7px 21px; font-size: 18px; }
.bookmark { display: flex; align-items: center; gap: 12px; line-height: 28px; }
.bookmark svg { width: 24px; height: 24px; }
.bookmark svg.small { padding: 2px; }
.more { margin-left: auto; font-size: 22px; font-weight: 600; line-height: 20px; margin-top: -8px; margin-right: -9px; color: #5f6368; }
.all { border-left: 1.500px solid #cfd0d2; padding-left: 14px; gap: 11px; height: 25px; }

.infobar { flex: none; height: 73px; display: flex; align-items: center; padding: 0 0 1px 24px; font-size: 19px; }
.infobar svg { width: 30px; height: 24px; }
.sharing { margin: 2px 19px 0 24px; }
button { height: 48px; font: 600 18px "Open Sans", sans-serif; border-radius: 5px; padding: 0 0 2px; }
button span { display: inline-block; }
.stop { width: 152px; border: 0; background: #1a73e8; color: #fff; margin-right: 12px; }
.view { width: 272px; border: 1px solid #dadce0; background: #fff; color: #1a66dc; }

.page { flex: none; height: 783px; background: #333; display: flex; justify-content: center; padding-right: 2px; position: relative; }
.share-frame { position: absolute; inset: 0; border: 7px solid rgba(26, 93, 184, .73); border-top-color: #1d4b89; box-shadow: inset 0 1px #6c95cd; }
.player { width: 1252px; background: #000; display: flex; flex-direction: column; position: relative; }
.top-shade { height: 39px; flex: none; background: linear-gradient(#16191e, #202226); }
.top-shade::after { content: ""; display: block; height: 100px; margin-top: 39px; background: linear-gradient(#0c0d12, #000); }
h1 { position: absolute; z-index: 2; left: 25.500px; top: 27px; margin: 0; font: 500 24px/36px Inter, "Liberation Sans", sans-serif; color: #fff; text-shadow: 0 1px 2px #0006; }
h1 span, h2 span { display: inline-block; }
.video { width: 1124.500px; height: 646px; flex: none; margin: 13px 0 0 64px; z-index: 1; background: #fff; overflow: hidden; display: flex; flex-direction: column; }
.v-tabs { height: 25px; flex: none; display: flex; align-items: center; background: linear-gradient(#8e8e8e, #bcbcbc); border-bottom: 1px solid #858585; font-size: 11px; color: #555; position: relative; }
.v-tab { width: 62.300px; height: 25px; flex: none; position: relative; display: flex; align-items: center; padding: 6px 0 0 8px; background: linear-gradient(#858585, #a9a9a9); }
.v-tab span { margin-left: 6px; width: 14px; line-height: 16px; letter-spacing: -.3px; }
.v-tab b { margin-left: 0; width: 12px; text-align: center; font: 700 12px/12px "DejaVu Sans", sans-serif; color: #4b4b4b; }
.v-tab.first { width: 33px; padding-left: 0; }
.v-tab.first span { margin-left: -3px; width: 11px; }
.v-tab.first b { margin-left: 4px; }
.v-tab.current { background: linear-gradient(#a7a7a7, #cbcbcb); }
.slant { position: absolute; left: -6px; top: 0; width: 10px; height: 24px; fill: none; stroke: #6e6e6e; stroke-width: 1.200; z-index: 1; }
.v-icon { width: 14px; height: 14px; }
.v-new { width: 27px; height: 15px; margin: 0 0 0 6px; border: 1px solid #888; background: #9c9c9c; transform: skewX(22deg); border-radius: 2px; }
.v-person { width: 21px; height: 17px; align-self: flex-start; margin-left: 15px; }
.v-keys { width: 54px; height: 18px; margin: 0 0 1px 19px; fill: none; stroke: #222; stroke-width: 1.600; }
.v-toolbar { height: 34px; flex: none; display: flex; align-items: center; background: linear-gradient(#c8c8c8, #e8e8e8); border-bottom: 1px solid #a5a5a5; }
.v-forward { width: 6px; height: 12px; fill: none; stroke: #999; stroke-width: 1.500; }
.v-reload { width: 14px; height: 14px; margin: 2px 13px 0 11px; filter: brightness(.6); }
.v-url { width: 1065.500px; flex: none; height: 25px; margin-left: -4px; border: 1.500px solid #acacac; border-radius: 2px; background: linear-gradient(#d2d2d2, #e6e6e6); display: flex; align-items: center; font-size: 12px; }
.v-url span { display: inline-block; line-height: 18px; padding-top: 2px; }
.v-url > svg:first-child { width: 10px; height: 12px; margin: 0 7px 0 7px; }
.v-url i { width: 1px; height: 14px; background: #999; margin: 0 7px 0 8px; }
.secure { color: #2a705b; }
.v-host { color: #222; }
.v-path { color: #707070; }
.v-star { width: 15px; height: 15px; margin: 0 5px 0 auto; filter: brightness(.7); }
.cookie { width: 16px; height: 14px; margin-left: 9px; }
.doc { height: 543px; flex: none; overflow: hidden; display: flex; padding-left: 236px; }
article { flex: 1; border-left: 1.500px solid #ccc; padding: 0 39px 0 18px; font: 12.600px/17.800px "Liberation Sans", Arial, sans-serif; color: #484848; overflow: hidden; }
article p { margin: 0; }
article p > span, .code span { display: block; width: max-content; }
article p > span, .step em { position: relative; top: 1px; }
.code { background: #efedf1; border: 1.500px solid #c6c6ca; border-radius: 5px; font: 11.300px/18px "DejaVu Sans Mono", "Liberation Mono", monospace; color: #3b3b3f; }
.response { margin: -11px 0 9px; height: 95px; padding: 0 0 0 21px; }
.box { height: 64px; display: flex; align-items: center; padding: 1px 0 0 21px; }
h2 { margin: 30px 0 10px; font: 600 20px/24px Inter, "Liberation Sans", sans-serif; color: #173f75; }
.now { margin-bottom: 8.500px; }
.step { display: flex; }
.step em { width: 35px; flex: none; padding-left: 21px; font-style: normal; }
.nested { margin-left: 35px; padding-top: 0; position: relative; }
.code .selected { background: #0f7dfb; color: #fff; font-weight: 700; line-height: 15px; margin-top: -1px; }
.caret { position: absolute; left: 266px; top: 18px; width: 7px; height: 16px; fill: none; stroke: #333; }
.done { display: flex; padding-top: 9px; }
.done svg { width: 14.500px; height: 14.500px; margin: -1px 2px 0 0; }
.downloads { height: 43px; flex: none; border-top: 1px solid #d0d0d0; background: #f2f2f3; display: flex; align-items: center; padding-left: 2px; font: 12px "Open Sans", sans-serif; color: #444; }
.downloads > span { padding-top: 4px; }
.downloads > svg { width: 10px; height: 8px; margin-left: 13px; fill: none; stroke: #555; stroke-width: 1.800; }
.downloads > i { width: 1px; height: 32px; margin-left: 16px; background: #bbb; }
.show-all { width: 75px; height: 25px; margin: 0 -15px 1px auto; padding: 0 0 2px 13px; border: 1px solid #b5b5b5; border-radius: 3px; background: #fff; font-weight: 600; font-size: 11.500px; line-height: 22px; }
.show-all span { display: inline-block; }
.step-key { position: absolute; top: 365px; width: 31px; height: 53px; background: #2d2f31; border: 1px solid #3e4143; display: flex; align-items: center; justify-content: center; z-index: 2; }
.step-key svg { width: 12px; height: 17px; fill: none; stroke: #fff; stroke-width: 2.800; }
.prev { left: 0; border-left: 0; }
.next { right: 0; width: 30px; border-right: 0; }
.progress { flex: none; height: 7px; margin: 25px 13px 0; background: #c0c0c0; display: flex; position: relative; border-top: 1px solid #777; }
.played { width: 550px; background: #a435f0; }
.buffered { width: 58px; background: #6a6f73; }
.marker { position: absolute; top: -4px; width: 6px; height: 13px; background: #3e4143; }
.watermark { position: absolute; left: 1189.500px; top: -5px; font-size: 14px; line-height: 18px; color: #8d8d8d; }
.controls { flex: none; height: 39px; margin-top: 14px; padding: 0 26px 11px 22px; background: linear-gradient(#26282c, #15181c); display: flex; align-items: center; }
.play { width: 20px; height: 21px; }
.rewind { width: 21px; height: 22px; margin: 0 11px 0 21px; }
.rate { width: 53px; height: 20px; background: #f9fafc; color: #2d2f31; font: 700 14px/20px Inter, sans-serif; text-align: center; }
.ahead { width: 21px; height: 22px; margin: 0 17px 0 12px; }
.time { color: #fff; font: 700 15.500px Inter, sans-serif; }
.control-end { display: flex; gap: 20px; margin-left: auto; }
.control-end svg { width: 21.500px; height: 21px; }
.control-end svg:last-child { width: 19px; height: 19px; margin: 1px 0 0 1px; }

.taskbar { flex: none; height: 60px; background: #d8d7d9; display: flex; align-items: center; }
.sys { width: 72px; display: flex; justify-content: center; }
.sys svg { width: 24px; height: 24px; }
.sys .search { width: 34px; height: 34px; }
.apps { display: flex; margin-left: 3.500px; }
.app { width: 75px; height: 60px; display: flex; align-items: center; justify-content: center; position: relative; }
.app svg { width: 36px; height: 36px; }
.app.open::after { content: ""; position: absolute; left: 7px; bottom: 0; width: 61px; height: 3px; background: #0078d7; }
.app.pair::after { background: linear-gradient(90deg, #0078d7 49px, #65a9e2 49px); }
.app.focused { background: #f0f0f1; }
.app.focused::after { left: 0; width: 75px; }
.tray { flex: 1; height: 60px; display: flex; align-items: center; padding-left: 81px; gap: 12px; color: #111; }
.tray svg { width: 24px; height: 24px; fill: none; stroke: #111; stroke-width: 1.400; }
.lang { font-size: 17px; margin-left: 4px; }
.clock { width: 93px; margin-left: 9px; display: flex; flex-direction: column; align-items: center; gap: 5px; font-size: 17px; line-height: 24px; }
.tray .notice { width: 38px; height: 38px; margin: 5px 0 0 16px; }
.desktop-edge { width: 1.500px; height: 60px; margin-left: auto; margin-right: 6px; background: #aaa; }
</style>
